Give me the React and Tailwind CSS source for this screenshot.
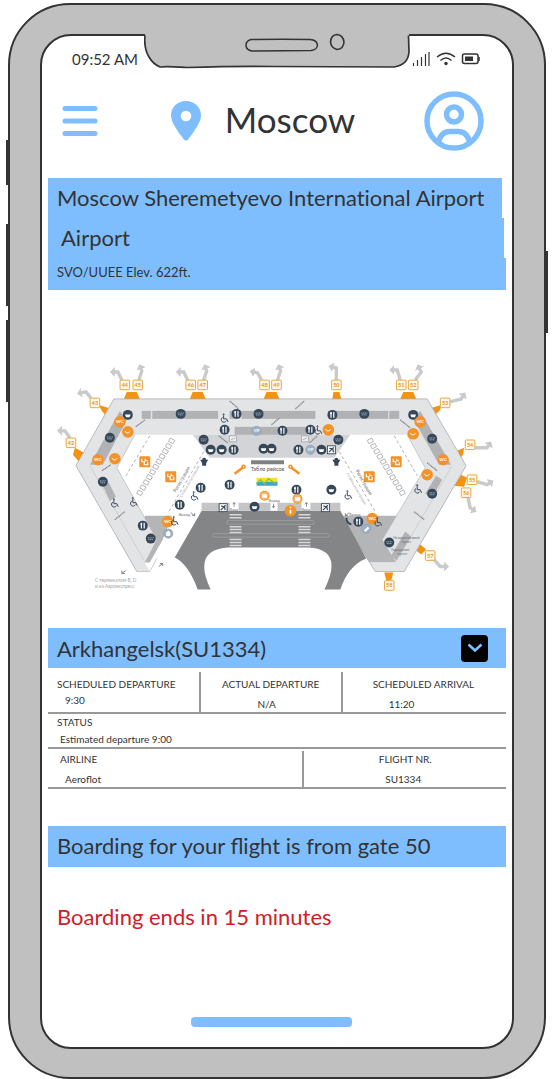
import React from "react";

const GATES = [
  { n: 42, x: 71, y: 443, zone: "75,448 86,454 79,462 73,455", arrow: "M70 438 L65 431 L61 431" },
  { n: 43, x: 95, y: 403, zone: "99,405 109,408 106,416 102,411", arrow: "M91 398 L86 392 L81 393" },
  { n: 44, x: 125, y: 385, zone: "127,392 137,392 140,399 124,399", arrow: "M122 380 L118 372 L114 372" },
  { n: 45, x: 138, y: 385, zone: "", arrow: "M139 380 L142 371 L141 368" },
  { n: 46, x: 191, y: 385, zone: "193,392 203,392 206,399 190,399", arrow: "M188 380 L184 372 L180 372" },
  { n: 47, x: 203, y: 385, zone: "", arrow: "M204 380 L207 371 L206 368" },
  { n: 48, x: 265, y: 385, zone: "267,392 277,392 280,399 264,399", arrow: "M262 380 L258 373 L254 372" },
  { n: 49, x: 277, y: 385, zone: "", arrow: "M278 380 L281 371 L280 368" },
  { n: 50, x: 337, y: 385, zone: "334,392 340,392 342,399 333,399", arrow: "M337 380 L337 368 L333 367" },
  { n: 51, x: 402, y: 385, zone: "404,392 414,392 417,399 401,399", arrow: "M401 380 L398 370 L394 370" },
  { n: 52, x: 414, y: 385, zone: "", arrow: "M416 380 L422 372 L420 368" },
  { n: 53, x: 446, y: 403, zone: "442,405 441,410 436,415 432,408", arrow: "M451 402 L462 399 L464 396" },
  { n: 54, x: 471, y: 445, zone: "465,448 464,455 460,460 456,452", arrow: "M476 448 L488 448 L490 445" },
  { n: 55, x: 473, y: 480, zone: "462,475 468,478 465,487 455,486", arrow: "M478 482 L488 485 L491 483" },
  { n: 56, x: 467, y: 493, zone: "", arrow: "M469 498 L471 508 L474 510" },
  { n: 57, x: 431, y: 556, zone: "420,544 427,550 422,555 417,551", arrow: "M435 560 L441 567 L446 567" },
  { n: 58, x: 390, y: 586, zone: "385,573 394,573 392,581 387,581", arrow: "" },
];

const FOOD = [
  [237, 414], [225, 430], [283, 431], [311, 430], [333, 415], [234, 450], [299, 450],
  [201, 488], [230, 485], [180, 505], [143, 526], [297, 490], [359, 522],
];
const SHOPS = [
  [110, 438], [103, 482], [151, 539], [181, 414], [259, 414], [204, 440], [339, 440],
  [365, 414], [433, 439], [433, 494], [390, 543],
];
const CUPS = [
  [128, 415], [414, 415], [211, 450], [222, 450], [264, 449], [272, 449], [322, 450],
  [255, 507], [332, 490],
];
const WC = [[120, 422], [98, 460], [168, 522], [421, 422], [444, 460], [373, 519]];
const LOUNGE = [[128, 432], [115, 459], [329, 430], [414, 434], [428, 475]];
const WHEELCHAIRS = [
  [225, 418], [319, 430], [115, 503], [134, 502], [195, 496], [175, 521], [349, 495], [419, 489], [379, 522],
];
const NOTES = [
  "M136 427 l9 -7", "M230 401 l9 8", "M296 409 l9 -8", "M272 425 l8 -7", "M219 436 l9 7",
  "M310 443 l8 -7", "M401 420 l10 8", "M102 471 l9 -6", "M115 520 l10 -8", "M428 463 l10 8", "M415 512 l10 8",
];
const ROWS = [0, 1, 2, 3, 4, 5, 6, 7, 8, 9, 10];

function Gate({ n, x, y, zone, arrow }) {
  return (
    <g>
      {arrow && <path d={arrow} fill="none" stroke="#c9cacc" strokeWidth="3.4" markerEnd="url(#arrowhead)" />}
      {zone && <polygon points={zone} fill="#f29412" />}
      <rect x={x - 4.8} y={y - 4.8} width="9.6" height="9.6" rx="0.8" fill="#fff8e6" stroke="#e9a640" strokeWidth="1" />
      <text x={x} y={y + 2} textAnchor="middle" fontSize="5.5" fontWeight="700" fill="#e0932a">{n}</text>
    </g>
  );
}

function Wheelchair({ x, y }) {
  return (
    <g fill="none" stroke="#3b4a5a" strokeWidth="1">
      <circle cx={x - 1} cy={y - 3.5} r="0.6" />
      <path d={`M${x - 1} ${y - 2.5} v3.5 h3 l1.4 3`} />
      <path d={`M${x - 2} ${y - 0.5} a2.6 2.6 0 1 0 3.6 3.4`} />
    </g>
  );
}

function TerminalMap() {
  return (
    <svg viewBox="48 360 459 232" className="block w-full font-[Lato,sans-serif]" role="img" aria-label="Terminal map">
      <defs>
        <marker id="arrowhead" markerUnits="userSpaceOnUse" markerWidth="10" markerHeight="12" refX="1" refY="5" orient="auto">
          <path d="M0 0 L5 5 L0 10 Z" fill="#c9cacc" />
        </marker>
      </defs>
      {GATES.map((g) => <Gate key={g.n} {...g} />)}

      <path d="M114 399 H428 L467 466 L405 572 H376 L340 512 H202 L166 572 H137 L76 466 Z" fill="#fff" />
      <path d="M145 516 H172 L163 540 L150 563 H143 Z M342 516 H398 L397 563 H370 Z" fill="#b4b5b7" />
      <path
        d="M114 399 H428 L467 466 L405 572 H376 L370 563 H397 L383 540 L426 468 L408 435 H135 L117 468 L157 540 L145 563 L150 572 H137 L76 466 Z"
        fill="#e2e4e6"
      />
      <path d="M137 572 L76 466 L114 399 H428 L467 466 L405 572 H376 L341 514" fill="none" stroke="#a9abae" strokeWidth="0.8" />
      <path d="M137 572 H150 L157 559 M135 435 L117 468 L157 540 M408 435 L426 468 L383 540" fill="none" stroke="#b4b6b9" strokeWidth="0.7" />
      <path d="M90 466 L145 562 M453 466 L397 562" fill="none" stroke="#c0c2c4" strokeWidth="0.6" />
      <polygon points="193,435 351,435 335,458 210,458" fill="#d2d4d7" />

      <g fill="#b1b2b4">
        <rect x="142" y="411" width="9" height="8" />
        <rect x="152.500" y="411" width="66" height="8" />
        <rect x="230" y="411" width="10.500" height="8" />
        <rect x="242" y="411" width="74" height="8" />
        <rect x="329" y="411" width="60" height="8" />
        <rect x="390" y="411" width="10" height="8" />
        <rect x="235" y="427" width="73" height="8" />
        <polygon points="120,411 127,420 103,465 90,465" />
        <polygon points="421,411 452,465 440,465 414,419" />
        <polygon points="103,486 109,483 116,497 110,501" />
        <polygon points="437,476 443,480 433,498 426,494" />
        <polygon points="406,532 412,537 397,561 392,556" />
      </g>

      <g stroke="#a5a7aa" strokeWidth="0.9" fill="none" strokeDasharray="3 2.500">
        <path d="M150 436 L125 478" />
        <path d="M204 452 L168 514" />
        <path d="M395 436 L418 476" />
        <path d="M340 452 L376 512" />
      </g>
      <g fill="#fff" stroke="#a9abad" strokeWidth="0.8">
        {ROWS.map((i) => (
          <React.Fragment key={i}>
            <rect x="-2.500" y="-1.800" width="5" height="3.800" transform={`translate(${172 - i * 3.2} ${441 + i * 5.2}) rotate(28)`} />
            <rect x="-2.500" y="-1.800" width="5" height="3.800" transform={`translate(${371 + i * 3.2} ${441 + i * 5.2}) rotate(-28)`} />
          </React.Fragment>
        ))}
      </g>
      <g stroke="#7f8388" strokeWidth="1.300" strokeDasharray="1.200 0.500" fill="none">
        {NOTES.map((d) => <path key={d} d={d} />)}
      </g>

      <path
        d="M202 511 H341 L367 559 Q349 566 341 590 H325 Q345 550 309 548 H229 Q192 550 211 590 H198 Q189 565 175 558 Z"
        fill="#848587"
      />
      <path d="M202 503 H341 V511 H202 Z" fill="#c3c5c7" />
      <path d="M230 503 h9 v8 h-9 z M271 503 h7 v8 h-7 z M302 503 h9 v8 h-9 z" fill="#fff" />
      <g fill="none" stroke="#9b9da0" strokeWidth="1">
        <rect x="227" y="521" width="88" height="3.500" rx="1.700" />
        <rect x="213" y="534" width="117" height="3.500" rx="1.700" />
      </g>
      <path
        d="M230 515 h12 M230 518 h12 M230 527 h12 M230 530 h12 M230 533 h12 M230 540 h12 M230 543 h12 M230 546 h12 M299 515 h12 M299 518 h12 M299 527 h12 M299 530 h12 M299 533 h12 M299 540 h12 M299 543 h12 M299 546 h12"
        stroke="#d7d8da"
        strokeWidth="1.500"
      />

      {FOOD.map(([x, y]) => (
        <g key={`f${x}-${y}`}>
          <circle cx={x} cy={y} r="5" fill="#37475a" />
          <path d={`M${x - 1.4} ${y - 3} v6 M${x + 1.4} ${y - 3} v6`} stroke="#fff" strokeWidth="1.200" />
          <path d={`M${x - 2.2} ${y - 1.5} h1.600`} stroke="#fff" strokeWidth="1.600" />
        </g>
      ))}
      {SHOPS.map(([x, y]) => (
        <g key={`s${x}-${y}`}>
          <circle cx={x} cy={y} r="5" fill="#37475a" />
          <path d={`M${x - 3} ${y - 0.8} h6 M${x - 2.5} ${y + 1} h5`} stroke="#aeb8c2" strokeWidth="0.900" strokeDasharray="1.200 0.500" />
        </g>
      ))}
      {CUPS.map(([x, y]) => (
        <g key={`c${x}-${y}`}>
          <circle cx={x} cy={y} r="5" fill="#37475a" />
          <path d={`M${x - 2.8} ${y - 0.5} h5.600 l-1 2.800 h-3.600 z`} fill="#fff" />
        </g>
      ))}
      {WC.map(([x, y]) => (
        <g key={`w${x}-${y}`}>
          <circle cx={x} cy={y} r="5.800" fill="#f2932a" />
          <text x={x} y={y + 1.6} textAnchor="middle" fontSize="4.500" fontWeight="700" fill="#fff">WC</text>
        </g>
      ))}
      {LOUNGE.map(([x, y]) => (
        <g key={`l${x}-${y}`}>
          <circle cx={x} cy={y} r="5.800" fill="#f2932a" />
          <path d={`M${x - 3} ${y - 1} l1.500 2 h2 l2 -1.600`} fill="none" stroke="#fff" strokeWidth="0.900" />
        </g>
      ))}
      {WHEELCHAIRS.map(([x, y]) => <Wheelchair key={`h${x}-${y}`} x={x} y={y} />)}

      <g fill="#9db1c4" stroke="#7d93a8" strokeWidth="0.500">
        <circle cx="257" cy="431" r="4.600" />
        <circle cx="311" cy="450" r="4.600" />
        <circle cx="168.500" cy="534" r="4.600" />
        <circle cx="367" cy="529" r="4.600" />
      </g>
      <path d="M165.500 534 l3 -3 l3 3 h-1 v2.500 h-4 v-2.500 z M364.500 531 l4 -4 l1.500 1.500 l-4 4 z" fill="#fff" />
      <g fontSize="3.600" fontWeight="700" fill="#fff" textAnchor="middle">
        <text x="257" y="432">VIP</text>
        <text x="311" y="451">VIP</text>
      </g>

      {[[145, 462], [171, 477], [397, 462], [370, 477]].map(([x, y]) => (
        <g key={`e${x}`}>
          <rect x={x - 5.5} y={y - 5.5} width="11" height="11" rx="1.200" fill="#f2932a" />
          <path d={`M${x - 3} ${y - 3} v3 h2.500 v3 h3.500 v-2.500 M${x + 0.5} ${y - 3} v2 h2.500`} fill="none" stroke="#fff" strokeWidth="1.200" />
        </g>
      ))}

      {[[223.500, 508], [326, 508], [332, 450]].map(([x, y]) => (
        <g key={`p${x}`}>
          <rect x={x - 4} y={y - 4} width="8" height="8" fill="#fff" stroke="#37475a" strokeWidth="0.900" />
          <path d={`M${x - 2.4} ${y + 2.4} L${x + 2.4} ${y - 2.4} M${x - 2} ${y - 1.5} l3.500 0.500 l0.500 3.500`} fill="none" stroke="#37475a" strokeWidth="1.200" />
        </g>
      ))}
      <path d="M200.500 460 h8 l-2 3.500 v2.500 h-4 v-2.500 z M333 460 h8 l-2 3.500 v2.500 h-4 v-2.500 z" fill="#37475a" />
      <circle cx="204.500" cy="460" r="2" fill="#37475a" />
      <circle cx="337" cy="460" r="2" fill="#37475a" />
      <g fill="#eceef0" stroke="#999ca0" strokeWidth="0.700">
        <rect x="230" y="436" width="7" height="6" />
        <rect x="302" y="436" width="7" height="6" />
        <path d="M231.500 440 l4 -2 M303.500 440 l4 -2" />
      </g>

      <rect x="251.500" y="460.500" width="33" height="4" fill="#808184" />
      <text x="268" y="471" textAnchor="middle" fontSize="5.500" fill="#4f5357">Табло рейсов</text>
      <g fill="none" stroke="#f2932a" strokeWidth="2.600">
        <path d="M235 474 L243 468 M300 474 L292 468" />
        <circle cx="244" cy="467" r="1.500" strokeWidth="1.600" />
        <circle cx="291" cy="467" r="1.500" strokeWidth="1.600" />
      </g>
      <path d="M257 478 h21 v4 h-21 z" fill="#ffe01f" />
      <path d="M257 482 h21 v4 h-21 z" fill="#36a5cf" />
      <path d="M257 484 l4 -4 l4 4 l4 -5 l7 5" fill="none" stroke="#8fc43a" strokeWidth="1.400" />
      {[[265, 496], [298, 499]].map(([x, y]) => (
        <g key={`b${x}`}>
          <circle cx={x} cy={y} r="5" fill="#f2932a" />
          <circle cx={x} cy={y} r="4" fill="#f7b76c" />
          <rect x={x - 2.5} y={y - 1.5} width="5" height="3.500" rx="0.500" fill="#fff" />
        </g>
      ))}
      <circle cx="291" cy="511" r="5.800" fill="#f2932a" />
      <path d="M291 510 v4 M291 507 v1.500" stroke="#fff" strokeWidth="1.600" />
      <path d="M234.500 507 v-4 m-1.500 1.500 l1.500 -1.500 l1.500 1.500 M274 504 v4 m-1.500 -1.500 l1.500 1.500 l1.500 -1.500 M307 507 v-4 m-1.500 1.500 l1.500 -1.500 l1.500 1.500 M191 513 l4 3 v-2.500 m0 2.500 h-2.500 M350 513 l-4 3 m0 -2.500 v2.500 h2.500" fill="none" stroke="#6d7074" strokeWidth="0.800" />
      <path d="M347 518 q0 5 5 7" fill="none" stroke="#37475a" strokeWidth="2" />
      <path d="M159 567 l4 -3 m-3 0 h3 v2.500 M126 571 l-4 3 v-3 m0 3 h3" fill="none" stroke="#7f8286" strokeWidth="1" />

      <g fontSize="3.800" fill="#6d7074">
        <text x="230" y="511">Вход</text>
        <text x="269" y="502">Выход</text>
        <text x="302" y="511">Вход</text>
        <text x="179" y="516">Выход</text>
        <text x="350" y="516">Выход</text>
        <text transform="translate(176 493) rotate(-60)" fontSize="5">Регистрация</text>
        <text transform="translate(182 498) rotate(-60)" fill="#a5a8ab">Стойки регистрации</text>
        <text transform="translate(356 471) rotate(60)" fontSize="5">Регистрация</text>
        <text transform="translate(347 474) rotate(60)" fill="#a5a8ab">Стойки регистрации</text>
        <text x="394" y="539">Неохраняемый</text>
        <text x="402" y="543">пункт</text>
        <text x="392" y="551">Городской</text>
        <text x="398" y="555">пункт</text>
      </g>
      <g fontSize="4.700" fill="#a3a6aa">
        <text x="95" y="582">С терминалом B, D</text>
        <text x="95" y="589">и на Аэроэкспресс</text>
      </g>
    </svg>
  );
}

function Notch() {
  return (
    <svg viewBox="0 0 266 36" className="absolute left-1/2 -top-[3px] h-[36px] w-[266px] -translate-x-1/2" aria-hidden="true">
      <path d="M1 0 H265 V3 H1 Z" fill="#c0c0c0" />
      <path
        d="M1 2.500 C0 12 2 19 5 24 Q9 31 16 34 C25 33 33 34 43 34.500 Q90 33 130 33.500 L250 34 Q264 32 265 19 L264.500 2.500"
        fill="#c0c0c0"
        stroke="#333"
        strokeWidth="1.700"
      />
      <path d="M107 6.500 Q140 6 166 6.500 Q173 7 173.500 12 Q173 17 167 17.500 L108 18 Q102 17 102 12 Q102 8 107 6.500 Z" fill="none" stroke="#333" strokeWidth="1.500" />
      <path d="M193 1.500 Q199 2 200 9 Q199.500 16 193 16.500 Q187 15 186.500 9 Q187 2 193 1.500 Z" fill="none" stroke="#333" strokeWidth="1.600" />
    </svg>
  );
}

function StatusIcons() {
  return (
    <svg viewBox="0 0 68 16" className="h-4 w-[68px]" role="img" aria-label="Signal, Wi-Fi and battery">
      <path d="M1.500 15 v-3 M5.500 15 v-6 M9.500 15 v-9 M13.500 15 v-12 M17 15 v-14" stroke="#333" strokeWidth="1.200" />
      <g fill="none" stroke="#333" strokeWidth="1.400">
        <path d="M25 6 Q34 -1.500 43 6" />
        <path d="M28.500 9.500 Q34 4.500 39.500 9.500" />
      </g>
      <circle cx="34" cy="12.500" r="1.700" fill="#333" />
      <rect x="50.500" y="3" width="15.500" height="9.500" rx="2" fill="none" stroke="#333" strokeWidth="1.500" />
      <rect x="53" y="5.500" width="8" height="4.500" fill="#333" />
      <path d="M67 6 v4" stroke="#333" strokeWidth="1.500" />
    </svg>
  );
}

function Field({ label, value, className }) {
  return (
    <div className={className}>
      <dt>{label}</dt>
      <dd>{value}</dd>
    </div>
  );
}

export default function App() {
  return (
    <div className="flex min-h-screen flex-col bg-white pl-2 pr-1.5 pt-[3px] font-[Lato,sans-serif] text-[#333]">
      <div className="relative flex flex-1 flex-col rounded-[62px] border-2 border-[#333] bg-[#c0c0c0] px-[30px] pb-[28px] pt-[29px]">
        <span className="absolute -left-1 top-[135px] h-[45px] w-1 bg-[#333]" />
        <span className="absolute -left-1 top-[219px] h-[82px] w-1 bg-[#333]" />
        <span className="absolute -left-1 top-[315px] h-[82px] w-1 bg-[#333]" />
        <span className="absolute -right-1 top-[246px] h-[82px] w-1 bg-[#333]" />

        <div className="relative flex flex-1 flex-col rounded-[31px] border-2 border-[#333] bg-white px-1.5">
          <Notch />
          <div className="flex h-[46px] items-center justify-between pl-6 pr-[26px]">
            <time className="text-[15px] leading-5">09:52 AM</time>
            <StatusIcons />
          </div>

          <header className="flex h-[77px] items-center justify-between pl-[14px] pr-[22px] text-[#7ebeff]">
            <button type="button" aria-label="Open menu">
              <svg viewBox="0 0 36 32" className="h-8 w-9" fill="none" stroke="currentColor" strokeWidth="5" strokeLinecap="round">
                <path d="M3 3.500 H33 M3 16 H33 M3 28.500 H33" />
              </svg>
            </button>
            <h1 className="flex items-center gap-6 pl-1 text-[35px] leading-10 text-[#333]">
              <svg viewBox="0 0 30 40" className="h-10 w-[30px] text-[#7ebeff]" aria-hidden="true">
                <path
                  d="M15 0 C6 0 0 6.500 0 14.500 C0 21.500 7 30.500 12.500 38 Q15 41 17.500 38 C23 30.500 30 21.500 30 14.500 C30 6.500 24 0 15 0 Z M15 9.700 A5.300 5.300 0 1 1 15 20.300 A5.300 5.300 0 1 1 15 9.700 Z"
                  fill="currentColor"
                  fillRule="evenodd"
                />
              </svg>
              <span className="pb-1">Moscow</span>
            </h1>
            <button type="button" aria-label="Account">
              <svg viewBox="0 0 60 60" className="size-[60px]" fill="none" stroke="currentColor" strokeWidth="5.500">
                <circle cx="30" cy="30" r="27" />
                <circle cx="30" cy="23.500" r="7.500" />
                <path d="M14.500 51 Q17 40.500 26 40.500 H34 Q43 40.500 45.500 51" />
              </svg>
            </button>
          </header>

          <main className="flex flex-1 flex-col">
            <section className="mt-[19px] *:bg-[#7ebeff] *:pl-[9px]">
              <h2 className="mr-1 whitespace-nowrap text-[22px] leading-10 [font-variant-ligatures:none]">Moscow Sheremetyevo International Airport</h2>
              <p className="mr-0.5 text-[22px] leading-10"><span className="pl-1">Airport</span></p>
              <p className="pb-1 text-[13px] leading-7">SVO/UUEE Elev. 622ft.</p>
            </section>

            <div className="mt-[70px]">
              <TerminalMap />
            </div>

            <section className="mt-[37px]">
              <div className="flex h-10 items-center justify-between bg-[#7ebeff] pl-[9px] pr-[18px]">
                <h2 className="text-[22px]">Arkhangelsk(SU1334)</h2>
                <button type="button" aria-label="Toggle flight details" aria-expanded="true" className="flex size-[27px] items-center justify-center rounded bg-black">
                  <svg viewBox="0 0 16 10" className="h-2.5 w-4" fill="none" stroke="#7ebeff" strokeWidth="2.600">
                    <path d="M1.500 1.500 L8 7.500 L14.500 1.500" />
                  </svg>
                </button>
              </div>
              <dl className="text-[10px] leading-4">
                <div className="flex border-b-2 border-[#999] pt-1">
                  <Field className="flex h-10 w-1/3 flex-col justify-between border-r-2 border-[#999] pl-[9px] pt-1 *:last:pl-2 *:last:pb-1" label="SCHEDULED DEPARTURE" value="9:30" />
                  <Field className="flex h-10 w-[31%] flex-col justify-between border-r-2 border-[#999] pt-1 text-center *:last:pr-2" label="ACTUAL DEPARTURE" value="N/A" />
                  <Field className="flex h-10 flex-1 flex-col justify-between pl-[30px] pt-1 *:last:pl-4" label="SCHEDULED ARRIVAL" value="11:20" />
                </div>
                <Field className="flex h-[35px] flex-col justify-between border-b-2 border-[#999] pl-[9px] *:last:pl-[3px]" label="STATUS" value="Estimated departure 9:00" />
                <div className="flex border-b-2 border-[#999] pt-0.5">
                  <Field className="flex h-9 w-[56%] flex-col justify-between border-r-2 border-[#999] pl-3 *:last:pl-[5px]" label="AIRLINE" value="Aeroflot" />
                  <Field className="flex h-9 flex-1 flex-col justify-between text-center *:last:pr-1" label="FLIGHT NR." value="SU1334" />
                </div>
              </dl>
            </section>

            <p className="mt-[37px] bg-[#7ebeff] pb-0.5 pl-[9px] text-[22px] leading-[39px]">Boarding for your flight is from gate 50</p>
            <p className="mt-[30px] pl-[9px] text-[22px] leading-10 text-[#ce2029]">Boarding ends in 15 minutes</p>
          </main>

          <footer className="mb-5 flex justify-center pr-3">
            <span className="h-2.5 w-[161px] rounded bg-[#7ebeff]" />
          </footer>
        </div>
      </div>
    </div>
  );
}
